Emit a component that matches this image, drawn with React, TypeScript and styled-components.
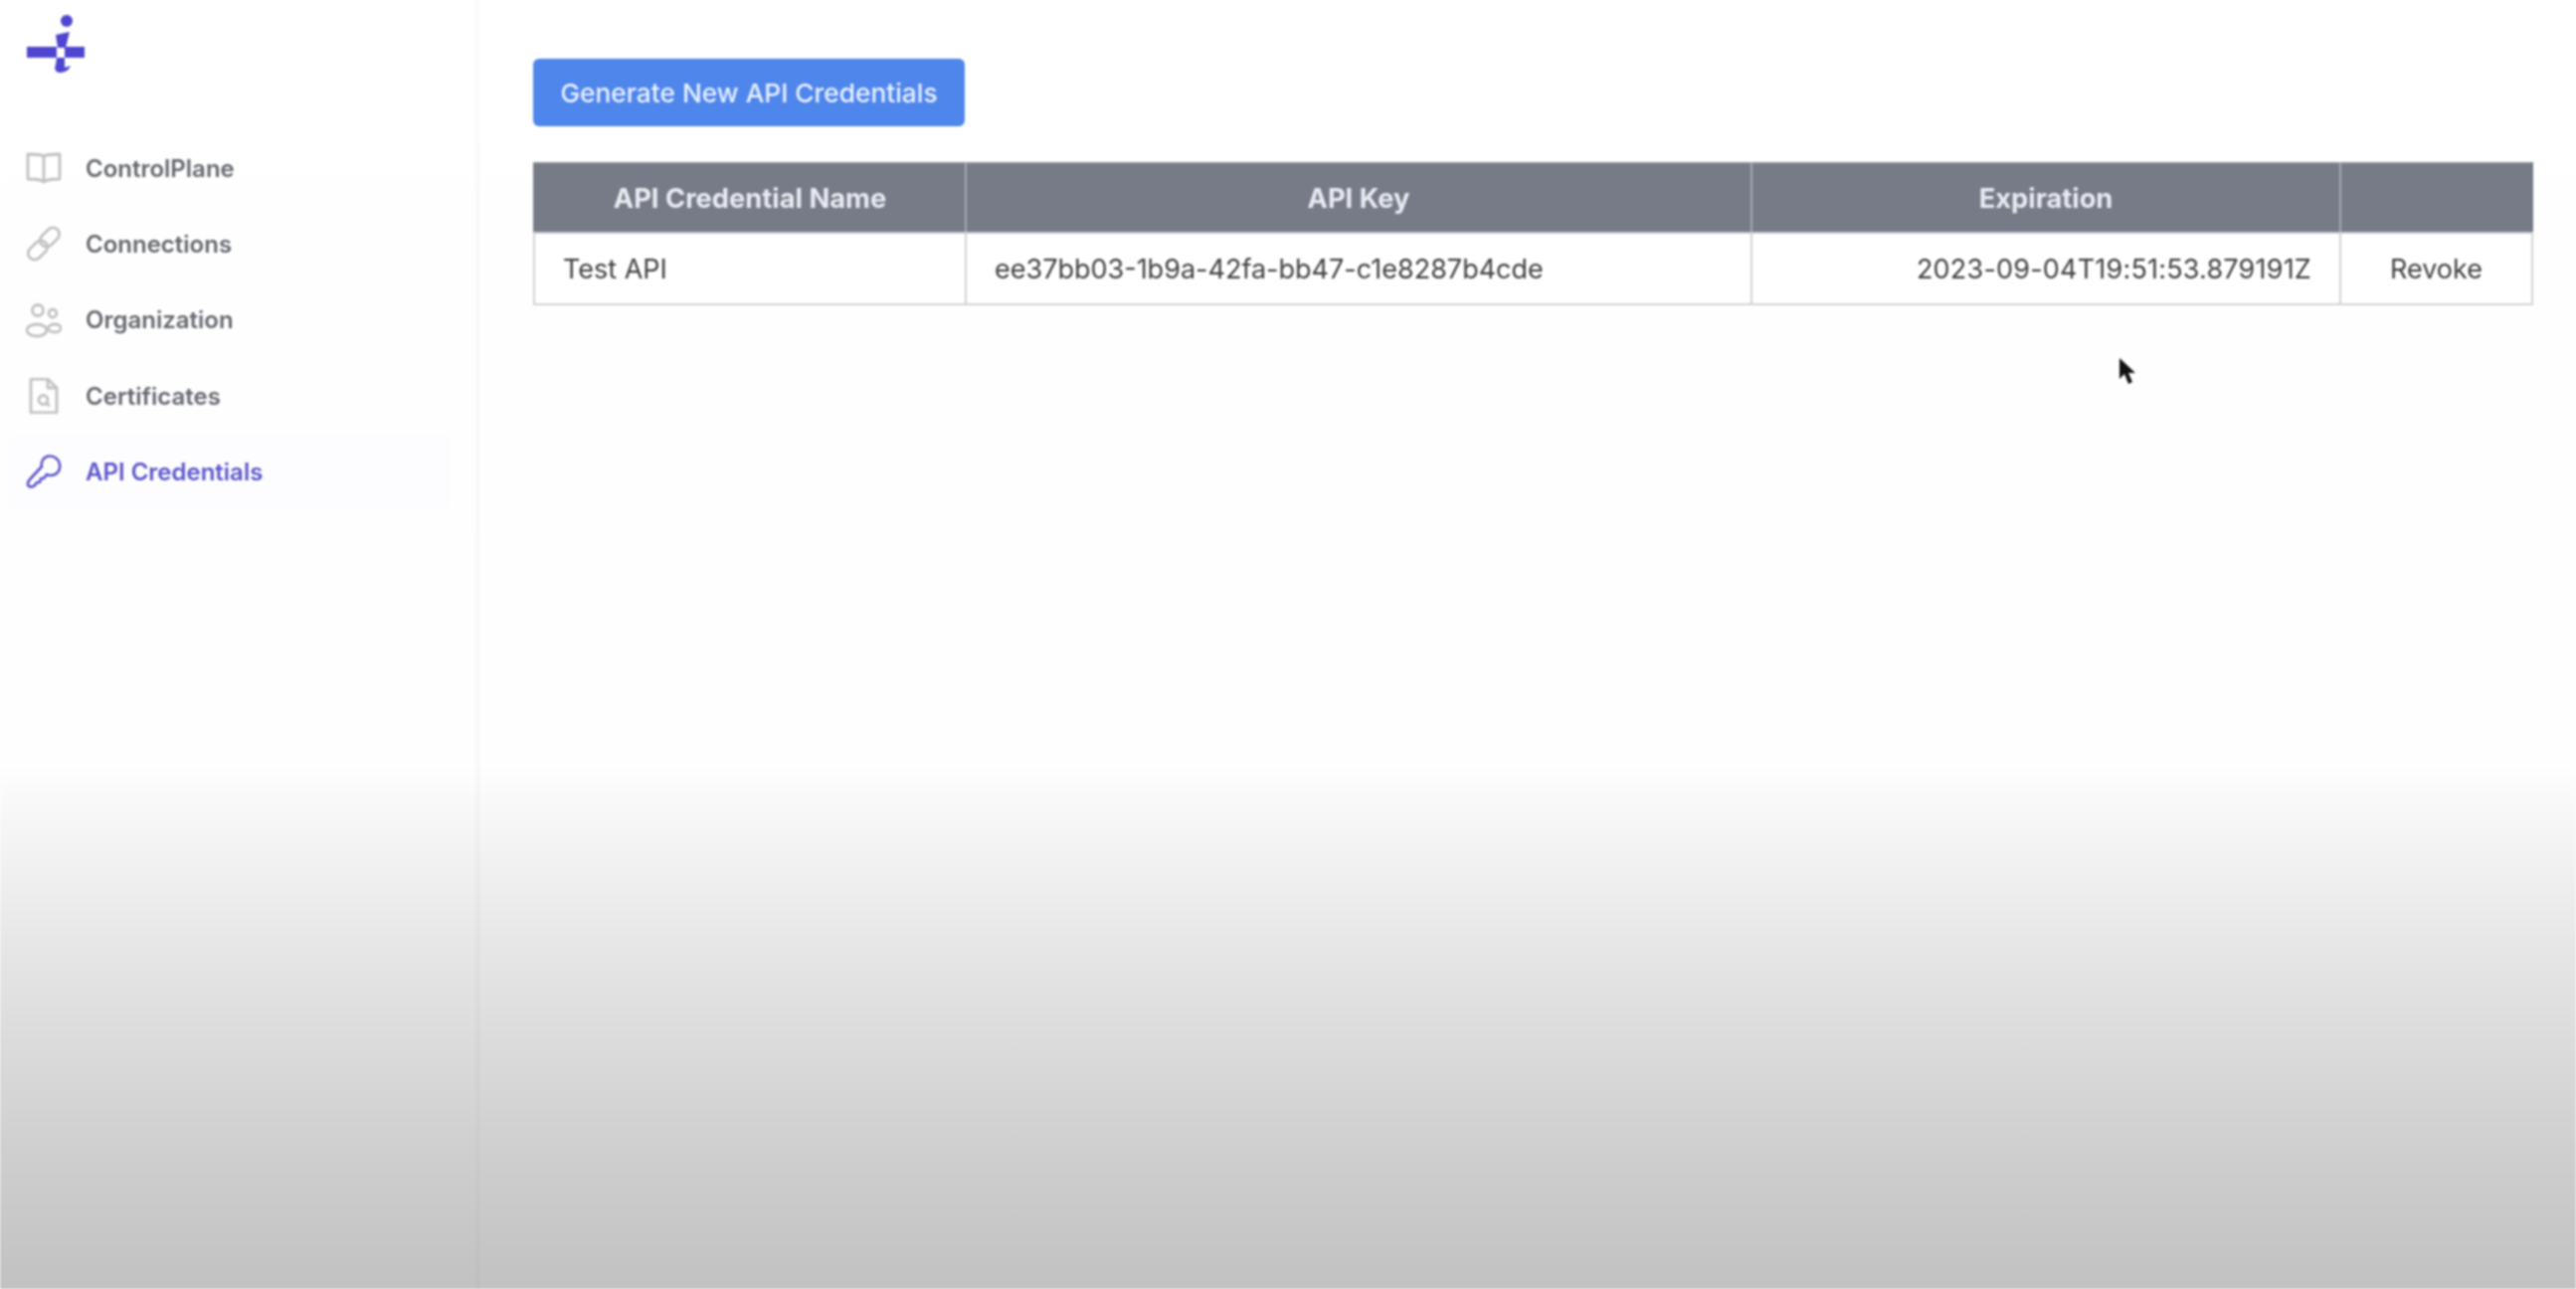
import React from 'react';
import styled, { createGlobalStyle } from 'styled-components';

const GlobalStyle = createGlobalStyle`
  html, body {
    margin: 0;
    padding: 0;
    height: 100%;
    background: #fff;
  }
  * {
    box-sizing: border-box;
  }
`;

const StyledApp = styled.div`
  position: relative;
  display: flex;
  width: 2590px;
  height: 1296px;
  overflow: hidden;
  font-family: 'Inter', 'Liberation Sans', sans-serif;
  background: linear-gradient(
    180deg,
    #ffffff 0px,
    #fefefe 770px,
    #f7f7f7 822px,
    #e9e9e9 930px,
    #dcdcdc 1042px,
    #cfcfcf 1156px,
    #c4c4c4 1270px,
    #c2c2c2 1296px
  );
  filter: blur(0.8px);
`;

const StyledSidebar = styled.aside`
  flex: 0 0 482px;
  padding-top: 15px;
  border-right: 3px solid rgba(0, 0, 0, 0.025);
`;

const StyledLogo = styled.svg`
  display: block;
  width: 60px;
  height: 58px;
  margin: 0 0 58px 27px;
`;

const StyledNav = styled.nav`
  display: flex;
  flex-direction: column;
`;

const StyledNavItem = styled.a<{ $active?: boolean }>`
  display: flex;
  align-items: center;
  gap: 24px;
  height: 76.3px;
  margin: 0 25px 0 8px;
  padding-left: 18px;
  font-size: 24px;
  font-weight: 600;
  color: ${({ $active }) => ($active ? '#5c56cc' : '#65686e')};
  background: ${({ $active }) => ($active ? '#fdfdff' : 'transparent')};
  border-radius: 8px;

  svg {
    flex: 0 0 36px;
    width: 36px;
    height: 36px;
    fill: none;
    stroke: ${({ $active }) => ($active ? '#5c56cc' : '#c2c2c2')};
    stroke-width: ${({ $active }) => ($active ? 2.6 : 2.8)};
    stroke-linecap: round;
    stroke-linejoin: round;
  }
`;

const StyledMain = styled.main`
  flex: 1;
  padding: 59px 44px 0 54px;
`;

const StyledButton = styled.button`
  display: block;
  width: 434px;
  height: 68px;
  margin-bottom: 36px;
  border: none;
  border-radius: 6px;
  font-family: inherit;
  font-size: 26.3px;
  font-weight: 500;
  color: #e9f1ff;
  background: #4f86ec;
`;

const StyledTable = styled.table`
  width: 2009px;
  table-layout: fixed;
  border-collapse: collapse;
`;

const StyledHead = styled.th`
  height: 70px;
  padding: 0 28px;
  font-size: 27.3px;
  font-weight: 700;
  text-align: center;
  color: #e9ebf1;
  background: #767b87;
  border: 2px solid #a4a7af;
  border-top-color: #8b8e96;
  border-bottom-color: #c9cace;

  &:first-child {
    border-left-color: #767b87;
  }
  &:last-child {
    border-right-color: #767b87;
  }
`;

const StyledCell = styled.td<{ $align?: string }>`
  height: 72px;
  padding: 0 28px;
  font-size: 27px;
  color: #404144;
  text-align: ${({ $align }) => $align || 'left'};
  background: #fff;
  border: 2px solid #d2d2d4;
`;

const StyledDateCell = styled(StyledCell)`
  letter-spacing: 0.2px;
`;

const StyledCursor = styled.svg`
  position: absolute;
  left: 2130px;
  top: 359px;
  width: 18px;
  height: 28px;
`;

const navItems = [
  {
    label: 'ControlPlane',
    icon: (
      <>
        <path d="M18 6c-3-2-9-2-16-2v25c7 0 13 0 16 3 3-3 9-3 16-3V4c-7 0-13 0-16 2z" />
        <path d="M18 6v25" />
      </>
    ),
  },
  {
    label: 'Connections',
    icon: (
      <>
        <rect x="13" y="5" width="22" height="13" rx="6.5" transform="rotate(-45 24 11.5)" />
        <rect x="1" y="18" width="22" height="13" rx="6.5" transform="rotate(-45 12 24.5)" />
      </>
    ),
  },
  {
    label: 'Organization',
    icon: (
      <>
        <circle cx="12" cy="8" r="5.5" />
        <circle cx="27" cy="11" r="4" />
        <ellipse cx="11" cy="28" rx="10" ry="6" />
        <ellipse cx="29" cy="26" rx="6.5" ry="4" />
      </>
    ),
  },
  {
    label: 'Certificates',
    icon: (
      <>
        <path d="M5 1h17l9 9v25H5z" />
        <path d="M22 1v9h9" />
        <circle cx="17.5" cy="22" r="4.5" />
        <path d="M21 25.5l2 2" />
      </>
    ),
  },
  {
    label: 'API Credentials',
    active: true,
    icon: (
      <>
        <path d="M21 3c6-2 12 2 13 8s-3 11-9 11c-2 0-3 0-4-1l-3 4h-3l-1 4h-3l-2 3c-2 2-7 2-7-1 0-2 0-3 2-5l12-13c-1-4 1-8 5-10z" />
      </>
    ),
  },
];

const App: React.FC = () => {
  return (
    <StyledApp>
      <GlobalStyle />
      <StyledSidebar>
        <StyledLogo viewBox="0 0 60 58">
          <circle cx="40" cy="6" r="6" fill="#4f46d0" />
          <path d="M29 20l14-3-4 16h-8z" fill="#4f46d0" />
          <rect x="0" y="32" width="30" height="11" fill="#4f46d0" />
          <rect x="38" y="32" width="20" height="11" fill="#4f46d0" />
          <path d="M30 43h8v10l6-2c-2 5-6 7-11 7-4 0-6-4-4-8z" fill="#4f46d0" />
        </StyledLogo>
        <StyledNav>
          {navItems.map((item) => (
            <StyledNavItem key={item.label} $active={item.active}>
              <svg viewBox="0 0 36 36">{item.icon}</svg>
              {item.label}
            </StyledNavItem>
          ))}
        </StyledNav>
      </StyledSidebar>
      <StyledMain>
        <StyledButton>Generate New API Credentials</StyledButton>
        <StyledTable>
          <colgroup>
            <col style={{ width: 434 }} />
            <col style={{ width: 790 }} />
            <col style={{ width: 592 }} />
            <col style={{ width: 193 }} />
          </colgroup>
          <thead>
            <tr>
              <StyledHead>API Credential Name</StyledHead>
              <StyledHead>API Key</StyledHead>
              <StyledHead>Expiration</StyledHead>
              <StyledHead />
            </tr>
          </thead>
          <tbody>
            <tr>
              <StyledCell>Test API</StyledCell>
              <StyledCell>ee37bb03-1b9a-42fa-bb47-c1e8287b4cde</StyledCell>
              <StyledDateCell $align="right">2023-09-04T19:51:53.879191Z</StyledDateCell>
              <StyledCell $align="center">Revoke</StyledCell>
            </tr>
          </tbody>
        </StyledTable>
      </StyledMain>
      <StyledCursor viewBox="0 0 18 28">
        <path d="M1 1v21l5-5 4 10 4-2-4-9h7z" fill="#111" />
      </StyledCursor>
    </StyledApp>
  );
};

export default App;
